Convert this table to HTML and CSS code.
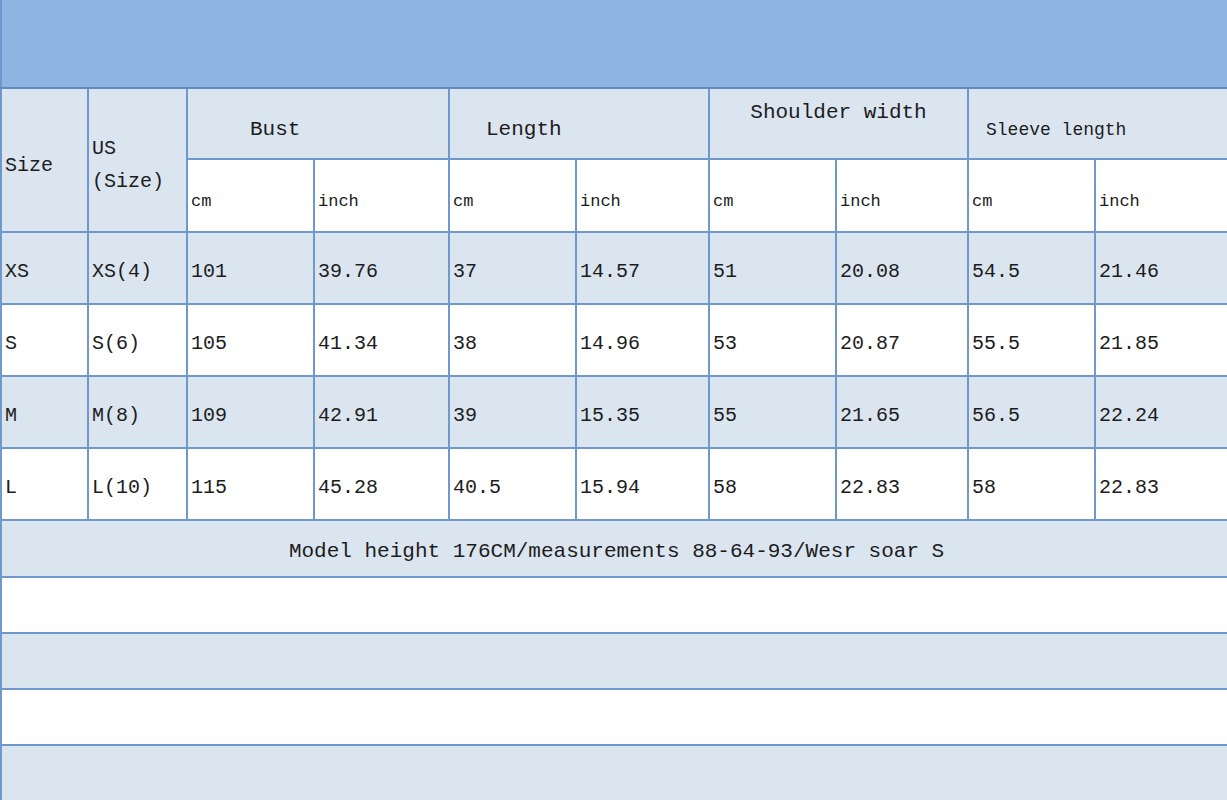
FILE: index.html
```html
<!DOCTYPE html>
<html>
<head>
<meta charset="utf-8">
<link rel="stylesheet" href="styles.css">
</head>
<body>
<table class="size-table">
  <colgroup>
    <col style="width:87px"><col style="width:99px"><col style="width:127px"><col style="width:135px"><col style="width:127px"><col style="width:133px"><col style="width:127px"><col style="width:132px"><col style="width:127px"><col style="width:133px">
  </colgroup>
  <tr class="band"><td colspan="10"></td></tr>
  <tr class="hdr1 blue">
    <td rowspan="2" class="mid">Size</td>
    <td rowspan="2" class="mid us">US<br>(Size)</td>
    <td colspan="2" class="grp bust">Bust</td>
    <td colspan="2" class="grp length">Length</td>
    <td colspan="2" class="grp shoulder">Shoulder width</td>
    <td colspan="2" class="grp sleeve">Sleeve length</td>
  </tr>
  <tr class="hdr2">
    <td class="unit">cm</td><td class="unit">inch</td>
    <td class="unit">cm</td><td class="unit">inch</td>
    <td class="unit">cm</td><td class="unit">inch</td>
    <td class="unit">cm</td><td class="unit">inch</td>
  </tr>
  <tr class="data blue">
    <td>XS</td><td>XS(4)</td><td>101</td><td>39.76</td><td>37</td><td>14.57</td><td>51</td><td>20.08</td><td>54.5</td><td>21.46</td>
  </tr>
  <tr class="data">
    <td>S</td><td>S(6)</td><td>105</td><td>41.34</td><td>38</td><td>14.96</td><td>53</td><td>20.87</td><td>55.5</td><td>21.85</td>
  </tr>
  <tr class="data blue">
    <td>M</td><td>M(8)</td><td>109</td><td>42.91</td><td>39</td><td>15.35</td><td>55</td><td>21.65</td><td>56.5</td><td>22.24</td>
  </tr>
  <tr class="data">
    <td>L</td><td>L(10)</td><td>115</td><td>45.28</td><td>40.5</td><td>15.94</td><td>58</td><td>22.83</td><td>58</td><td>22.83</td>
  </tr>
  <tr class="note blue"><td colspan="10">Model height 176CM/measurements 88-64-93/Wesr soar S</td></tr>
  <tr class="empty"><td colspan="10"></td></tr>
  <tr class="empty blue"><td colspan="10"></td></tr>
  <tr class="empty"><td colspan="10"></td></tr>
  <tr class="empty blue"><td colspan="10"></td></tr>
</table>
</body>
</html>
```

FILE: styles.css
```css
html, body {
  margin: 0;
  padding: 0;
  background: #ffffff;
  overflow: hidden;
}

.size-table {
  width: 1227px;
  table-layout: fixed;
  border-collapse: collapse;
  font-family: "Liberation Mono", "DejaVu Sans Mono", monospace;
  color: #1c1c1c;
  font-size: 20px;
}

.size-table td {
  border: 2px solid #6f98cc;
  padding: 0 0 0 3px;
  vertical-align: middle;
  text-align: left;
  white-space: nowrap;
  background: #ffffff;
}

.size-table tr.blue td,
.size-table td.mid {
  background: #dbe5f0;
}

.band td {
  height: 87px;
  background: #8eb4e2;
  border-top: none;
  border-right: none;
  border-bottom: 2px solid #5f8ac4;
}

.hdr1 td { height: 57px; }
.hdr2 td { height: 59px; }

.data td {
  height: 64px;
  padding-top: 6px;
}

.size-table td.mid {
  font-size: 20px;
  line-height: 33px;
  padding-top: 10px;
}

.size-table td.grp {
  font-size: 21px;
  padding-top: 12px;
}
.size-table td.bust { padding-left: 62px; }
.size-table td.length { padding-left: 36px; }
.size-table td.shoulder {
  text-align: center;
  vertical-align: top;
  padding-left: 0;
}
.size-table td.sleeve {
  font-size: 18px;
  padding-left: 17px;
}

.size-table td.unit {
  font-size: 17px;
  padding-top: 12px;
}

.note td {
  height: 49px;
  padding-top: 6px;
  text-align: center;
  font-size: 21px;
}

.empty td {
  height: 54px;
}

.size-table td:last-child { border-right: none; }
```
